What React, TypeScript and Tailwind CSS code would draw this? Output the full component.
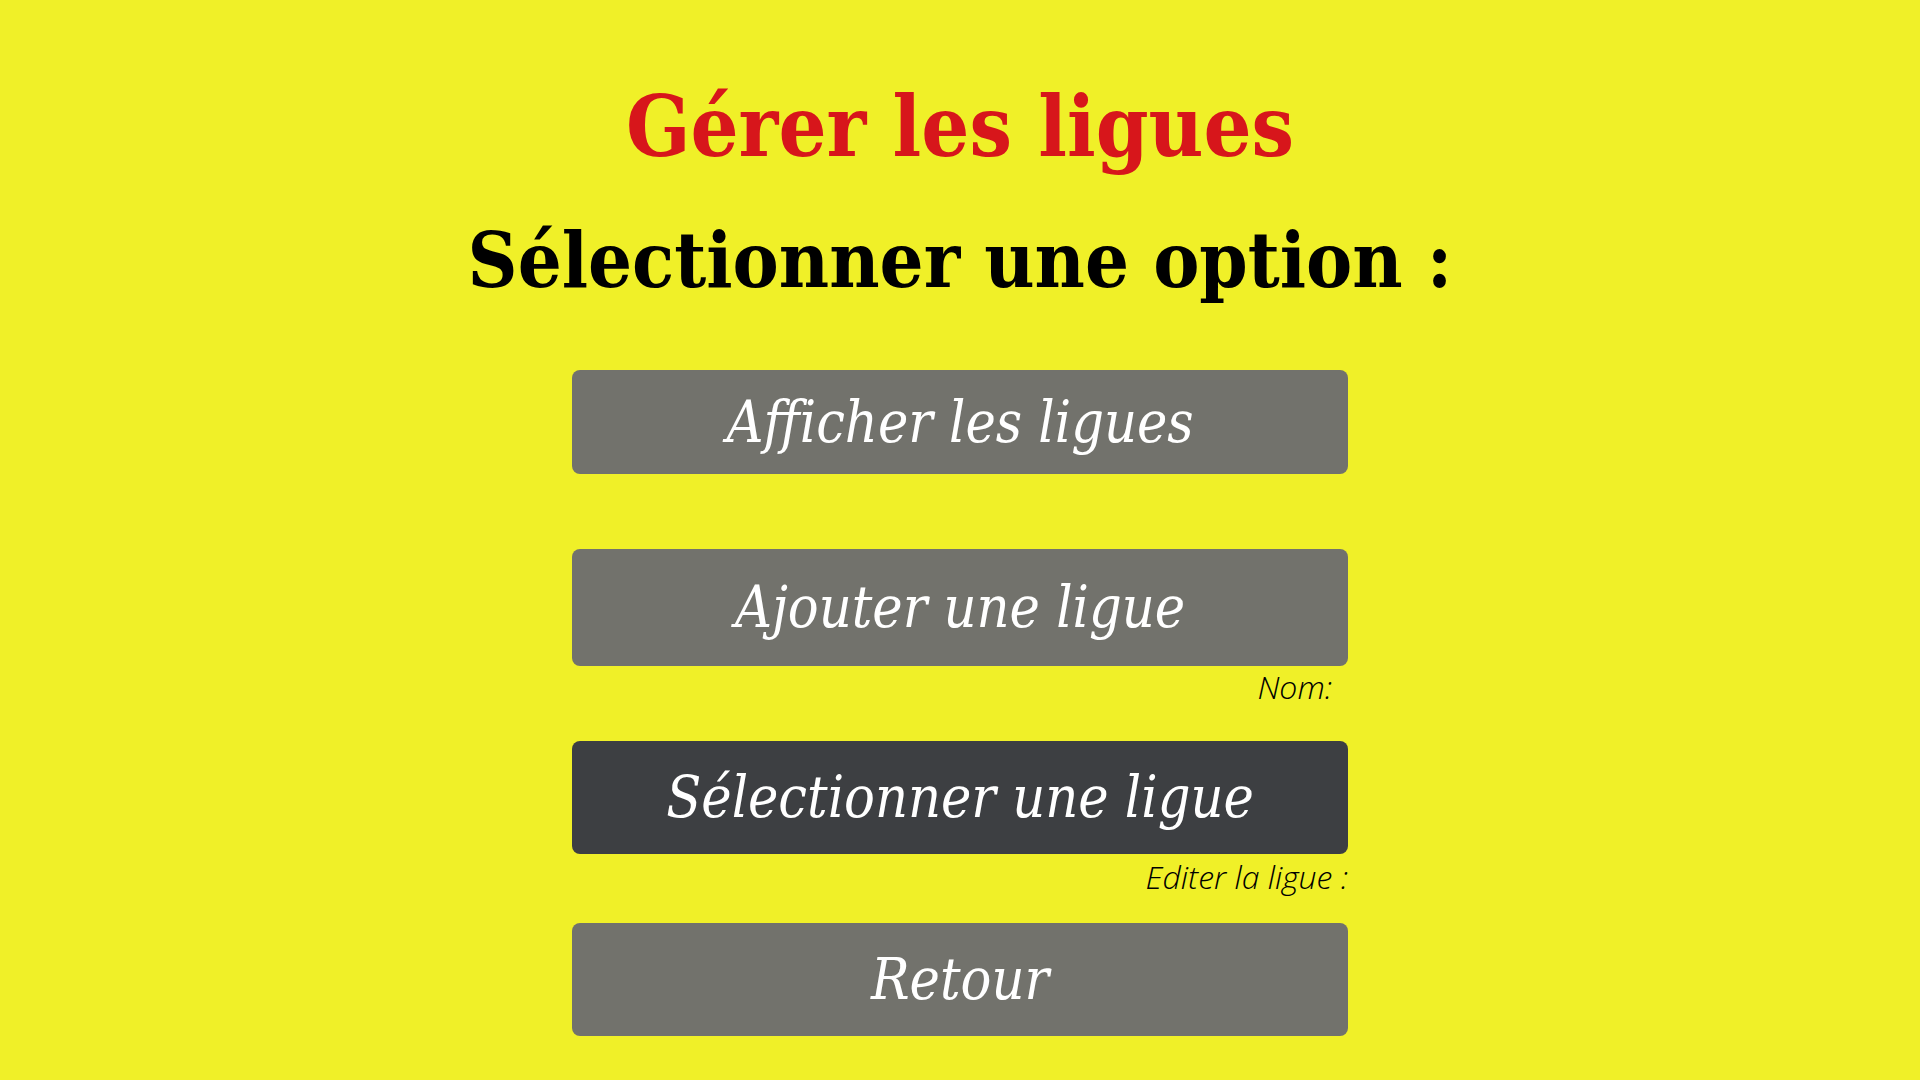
function MenuButton({ label, className }: { label: string; className: string }) {
  return (
    <button
      type="button"
      className={`w-full rounded-lg flex items-center justify-center text-white italic text-[57px] leading-none [font-stretch:condensed] font-['DejaVu_Serif','Liberation_Serif',serif] ${className}`}
    >
      {label}
    </button>
  );
}

const App = () => {
  return (
    <div className="min-h-screen w-full bg-[#f0f028] flex flex-col items-center">
      <h1 className="mt-[85px] text-[#d7161b] font-bold text-[84px] leading-none [font-stretch:condensed] font-['DejaVu_Serif','Liberation_Serif',serif]">
        Gérer les ligues
      </h1>
      <h2 className="mt-[53px] text-black font-bold text-[77px] leading-none [font-stretch:condensed] font-['DejaVu_Serif','Liberation_Serif',serif]">
        Sélectionner une option :
      </h2>

      <div className="w-[776px] mt-[71px] flex flex-col">
        <MenuButton label="Afficher les ligues" className="h-[104px] bg-[#72726c]" />
        <MenuButton label="Ajouter une ligue" className="mt-[75px] h-[117px] bg-[#72726c]" />
        <div className="h-[75px] flex justify-end pr-[16px]">
          <span className="mt-[5px] text-[32px] leading-none italic font-light text-black font-['Open_Sans','Noto_Sans',sans-serif]">
            Nom:
          </span>
        </div>
        <MenuButton label="Sélectionner une ligue" className="h-[113px] bg-[#3d3f42]" />
        <div className="h-[69px] flex justify-end">
          <span className="mt-[7px] text-[32px] leading-none italic font-light text-black font-['Open_Sans','Noto_Sans',sans-serif]">
            Editer la ligue :
          </span>
        </div>
        <MenuButton label="Retour" className="h-[113px] bg-[#72726c]" />
      </div>
    </div>
  );
};

export default App;
